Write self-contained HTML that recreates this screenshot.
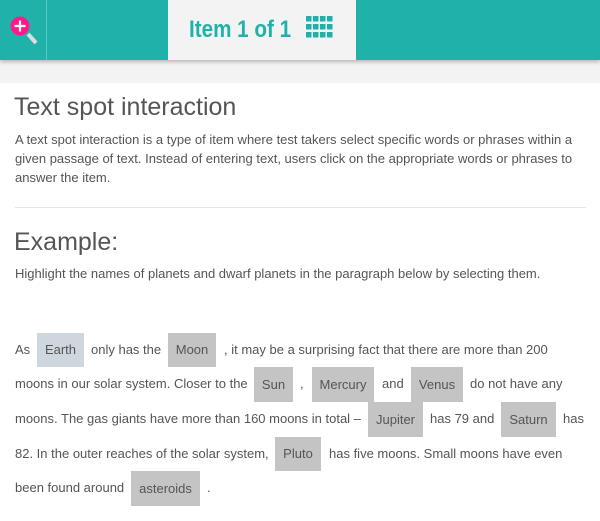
<!DOCTYPE html>
<html><head><meta charset="utf-8"><style>
*{margin:0;padding:0;box-sizing:border-box}
body{width:600px;height:521px;background:#fff;font-family:"Liberation Sans",Arial,sans-serif;color:#555;position:relative;overflow:hidden}
.hdr{position:absolute;left:0;top:0;width:600px;height:60px;background:#20b2aa;box-shadow:0 2px 4px rgba(0,0,0,.25);z-index:2}
.band{position:absolute;left:0;top:60px;width:600px;height:23px;background:#f3f3f3}
.ctr{position:absolute;left:168px;top:0;width:188px;height:60px;background:#f3f3f3}
.ctr span{position:absolute;left:21px;top:16px;font-size:24px;font-weight:bold;color:#20b2aa;transform:scaleX(0.86);transform-origin:0 0;white-space:nowrap}
.t{position:absolute;white-space:nowrap}
.p{font-size:13px;line-height:16px}
.c{position:absolute;background:#c4c4c4;font-size:13px;text-align:center;color:#555}
.e{background:#cfd7de}
</style></head><body>
<div class="hdr">
<div style="position:absolute;left:46px;top:0;width:1px;height:60px;background:#5ccac4"></div>
<svg style="position:absolute;left:8px;top:14px" width="32" height="34" viewBox="0 0 32 34">
<line x1="20" y1="20" x2="28" y2="29" stroke="#ddd" stroke-width="4"/>
<circle cx="12" cy="12" r="9.5" fill="#ff1a8c"/>
<path d="M12 6.5v11M6.5 12h11" stroke="#fff" stroke-width="2.2"/>
</svg>
<div class="ctr"><span>Item 1 of 1</span>
<svg style="position:absolute;left:138px;top:16px" width="27" height="22">
<g fill="#20b2aa">
<rect x="0" y="0" width="5.5" height="5.5"/><rect x="7" y="0" width="5.5" height="5.5"/><rect x="14" y="0" width="5.5" height="5.5"/><rect x="21" y="0" width="5.5" height="5.5"/>
<rect x="0" y="8" width="5.5" height="5.5"/><rect x="7" y="8" width="5.5" height="5.5"/><rect x="14" y="8" width="5.5" height="5.5"/><rect x="21" y="8" width="5.5" height="5.5"/>
<rect x="0" y="16" width="5.5" height="5.5"/><rect x="7" y="16" width="5.5" height="5.5"/><rect x="14" y="16" width="5.5" height="5.5"/><rect x="21" y="16" width="5.5" height="5.5"/>
</g></svg>
</div>
</div>
<div class="band"></div>
<div class="t" style="left:14px;top:93px;font-size:25px">Text spot interaction</div>
<div class="t" style="left:15px;top:130px;font-size:13px;line-height:19px;white-space:normal;width:575px">A text spot interaction is a type of item where test takers select specific words or phrases within a given passage of text. Instead of entering text, users click on the appropriate words or phrases to answer the item.</div>
<div style="position:absolute;left:15px;top:207px;width:571px;height:1px;background:#e6e6e6"></div>
<div class="t" style="left:14px;top:228px;font-size:25px">Example:</div>
<div class="t" style="left:15px;top:266px;font-size:13px">Highlight the names of planets and dwarf planets in the paragraph below by selecting them.</div>

<div class="c e" style="left:37px;top:333px;width:47px;height:34px;line-height:34px">Earth</div>
<div class="c" style="left:168px;top:333px;width:48px;height:34px;line-height:34px">Moon</div>
<div class="c" style="left:254px;top:367px;width:39px;height:35px;line-height:35px">Sun</div>
<div class="c" style="left:312px;top:367px;width:62px;height:35px;line-height:35px">Mercury</div>
<div class="c" style="left:411px;top:367px;width:52px;height:35px;line-height:35px">Venus</div>
<div class="c" style="left:368px;top:402px;width:55px;height:35px;line-height:35px">Jupiter</div>
<div class="c" style="left:501px;top:402px;width:55px;height:35px;line-height:35px">Saturn</div>
<div class="c" style="left:275px;top:437px;width:46px;height:34px;line-height:34px">Pluto</div>
<div class="c" style="left:131px;top:471px;width:69px;height:35px;line-height:35px">asteroids</div>

<div class="t p" style="left:15px;top:342px">As</div>
<div class="t p" style="left:91px;top:342px">only has the</div>
<div class="t p" style="left:224px;top:342px">, it may be a surprising fact that there are more than 200</div>
<div class="t p" style="left:15px;top:376px">moons in our solar system. Closer to the</div>
<div class="t p" style="left:300px;top:376px">,</div>
<div class="t p" style="left:382px;top:376px">and</div>
<div class="t p" style="left:470px;top:376px">do not have any</div>
<div class="t p" style="left:15px;top:411px">moons. The gas giants have more than 160 moons in total –</div>
<div class="t p" style="left:430px;top:411px">has 79 and</div>
<div class="t p" style="left:563px;top:411px">has</div>
<div class="t p" style="left:15px;top:446px">82. In the outer reaches of the solar system,</div>
<div class="t p" style="left:329px;top:446px">has five moons. Small moons have even</div>
<div class="t p" style="left:15px;top:480px">been found around</div>
<div class="t p" style="left:207px;top:480px">.</div>
</body></html>
